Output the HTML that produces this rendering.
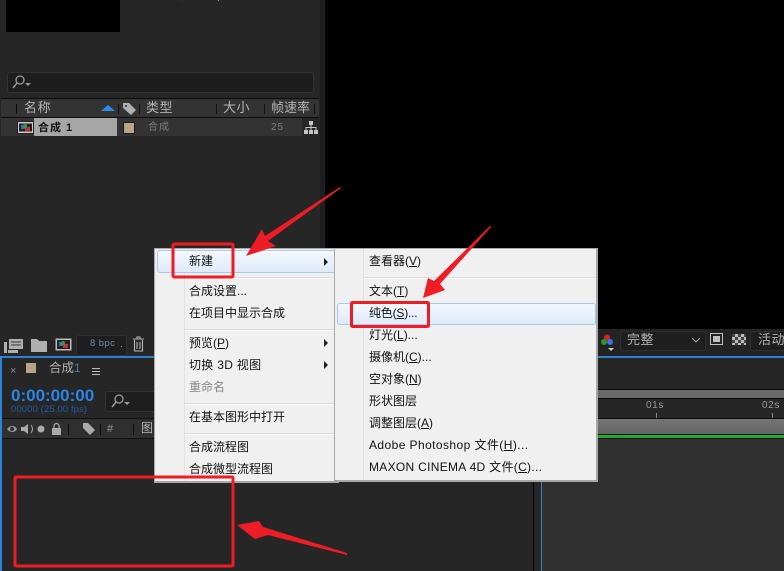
<!DOCTYPE html>
<html><head><meta charset="utf-8">
<style>
html,body{margin:0;padding:0;background:#000}
#r{position:relative;width:784px;height:571px;overflow:hidden;background:#000;font-family:"Liberation Sans","Noto Sans CJK SC",sans-serif}
#r div,#r span.a{position:absolute}
.t{white-space:nowrap;line-height:16px;height:16px}
.g{color:#b4b4b4;font-size:13px}
.m{color:#111;font-size:12px;white-space:nowrap;line-height:16px;height:16px}
.m u{text-underline-offset:1px}
.sep{height:1px;background:#dcdcdc;border-bottom:1px solid #fafafa}
.hl{border:1px solid #a8c8ea;border-radius:3px;background:linear-gradient(#f4f8fd,#dfeafa)}
.tri{width:0;height:0;border-left:4px solid #222;border-top:4px solid transparent;border-bottom:4px solid transparent}
.d{width:1px;background:#111}
</style></head><body>
<div id="r">
<!-- project panel -->
<div style="left:0;top:0;width:320px;height:333px;background:#262626"></div>
<div style="left:320px;top:0;width:5px;height:333px;background:#1e1e1e"></div>
<div style="left:6px;top:0;width:114px;height:32px;background:#000"></div>
<div class="t" style="left:125px;top:-11px;font-size:10px;color:#a8a8a8">□ 0:00:05:00, 25.00 fps</div>
<div style="left:7px;top:72px;width:305px;height:19px;background:#1d1d1d;border:1px solid #323232;border-radius:3px"></div>
<svg style="position:absolute;left:12px;top:74px" width="22" height="16"><circle cx="8" cy="6" r="4" fill="none" stroke="#9a9a9a" stroke-width="1.3"/><path d="M5 9L1 14" stroke="#9a9a9a" stroke-width="1.5"/><path d="M13 9h6l-3 3z" fill="#9a9a9a"/></svg>
<div style="left:1px;top:98px;width:318px;height:1px;background:#0c0c0c"></div>
<div style="left:1px;top:99px;width:318px;height:18px;background:#333"></div>
<div style="left:1px;top:117px;width:318px;height:1px;background:#0c0c0c"></div>
<div class="d" style="left:16px;top:104px;height:10px;background:#0d0d0d"></div>
<div class="d" style="left:118px;top:104px;height:10px"></div>
<div class="d" style="left:139px;top:104px;height:10px"></div>
<div class="d" style="left:216px;top:104px;height:10px"></div>
<div class="d" style="left:264px;top:104px;height:10px"></div>
<div class="d" style="left:314px;top:104px;height:10px"></div>
<div class="t g" style="left:24px;top:100px;letter-spacing:.5px">名称</div>
<div class="t g" style="left:146px;top:100px;letter-spacing:.5px">类型</div>
<div class="t g" style="left:223px;top:100px;letter-spacing:.5px">大小</div>
<div class="t g" style="left:271px;top:100px;font-size:13px">帧速率</div>
<svg style="position:absolute;left:101px;top:104px" width="14" height="8"><path d="M0 7L7 1L14 7z" fill="#2a8fe8"/></svg>
<svg style="position:absolute;left:122px;top:102px" width="15" height="14"><path d="M1 1h6l7 7-5 5-8-7z" fill="#b0b0b0"/><circle cx="4" cy="4" r="1" fill="#333"/></svg>
<div style="left:1px;top:118px;width:301px;height:18px;background:#333"></div>
<div style="left:34px;top:118px;width:83px;height:18px;background:#a6a6a6"></div>
<svg style="position:absolute;left:17px;top:121px" width="17" height="13"><rect x=".5" y=".5" width="16" height="12" fill="#ccc" stroke="#222"/><rect x="2" y="2.5" width="13" height="8" fill="#222"/><rect x="4" y="4" width="5" height="4" fill="#2a70c8"/><rect x="8" y="6" width="5" height="4" fill="#c83030"/><circle cx="8" cy="5" r="2" fill="#3a9a3a"/></svg>
<div class="t" style="left:38px;top:120px;font-size:11px;color:#111;font-weight:bold;letter-spacing:1px">合成 1</div>
<div style="left:123px;top:122px;width:10px;height:10px;background:#b5a488;border:1px solid #1c1c1c"></div>
<div class="t" style="left:148px;top:120px;font-size:10px;color:#7d7d7d;letter-spacing:1px">合成</div>
<div class="t" style="left:271px;top:120px;font-size:10px;color:#7d7d7d;letter-spacing:.8px">25</div>
<svg style="position:absolute;left:304px;top:121px" width="14" height="13"><path d="M5 0h4v4H5zM0 9h4v4H0zM5 9h4v4H5zM10 9h4v4h-4zM6.500 4h1v2h5v3h-1V7h-4v2h-1V7h-4v2h-1V6h5z" fill="#c4c4c4"/></svg>
<!-- bottom left toolbar -->
<div style="left:0;top:333px;width:156px;height:23px;background:#262626"></div>
<svg style="position:absolute;left:3px;top:336px" width="150" height="18"><path d="M6 3h14v10H6zM1 6h3v11H1zM5 14h10v3H5z" fill="#b0b0b0"/><path d="M8 6h10M8 9h10" stroke="#333"/><path d="M28 3h6l2 2h8v11H28z" fill="#b0b0b0"/><rect x="52" y="2" width="17" height="13" fill="#bbb" stroke="#222"/><rect x="54" y="4" width="13" height="9" fill="#222"/><rect x="56" y="6" width="5" height="4" fill="#2a70c8"/><rect x="60" y="8" width="5" height="4" fill="#c83030"/><circle cx="60" cy="7" r="2" fill="#3a9a3a"/></svg>
<div style="left:76px;top:335px;width:49px;height:19px;border:1px solid #2f2f2f;background:#1e1e1e;border-radius:3px"></div>
<div class="t" style="left:90px;top:336px;font-size:9.500px;color:#6f8aa8;letter-spacing:.4px">8 bpc</div>
<div style="left:121px;top:346px;width:1px;height:1px;background:#999"></div>
<svg style="position:absolute;left:132px;top:336px" width="14" height="16"><path d="M1 3h11M5 3V1h3v2M2.500 4v11h8V4M5 6v7M8 6v7" fill="none" stroke="#b4b4b4" stroke-width="1.100"/></svg>
<!-- comp toolbar right -->
<div style="left:598px;top:329px;width:186px;height:27px;background:#232323"></div>
<svg style="position:absolute;left:600px;top:333px" width="18" height="20"><circle cx="7" cy="4.500" r="3" fill="#e02020"/><circle cx="4" cy="9" r="3" fill="#20a020"/><circle cx="10" cy="9" r="3" fill="#3a70f0"/><path d="M8 15h6l-3 3z" fill="#ccc"/></svg>
<div style="left:620px;top:331px;width:84px;height:18px;background:#1e1e1e;border:1px solid #2f2f2f;border-radius:3px"></div>
<div class="t" style="left:627px;top:332px;font-size:13px;color:#b4b4b4;letter-spacing:.5px">完整</div>
<svg style="position:absolute;left:691px;top:337px" width="10" height="6"><path d="M1 1l4 4 4-4" fill="none" stroke="#aaa"/></svg>
<div style="left:710px;top:333px;width:11px;height:10px;border:1px solid #c0c0c0"></div>
<div style="left:713px;top:336px;width:7px;height:6px;background:#c0c0c0"></div>
<div style="left:732px;top:334px;width:14px;height:11px;background:repeating-conic-gradient(#bbb 0 25%,#444 0 50%) 0 0/6px 6px"></div>
<div style="left:750px;top:331px;width:40px;height:18px;background:#1e1e1e;border:1px solid #2f2f2f;border-radius:3px"></div>
<div class="t" style="left:758px;top:332px;font-size:13px;color:#b4b4b4;letter-spacing:.5px">活动</div>
<!-- timeline panel -->
<div style="left:0;top:356px;width:784px;height:215px;background:#262626"></div>
<div style="left:0;top:356px;width:784px;height:2px;background:#2d7fd0"></div>
<div style="left:0;top:356px;width:2px;height:215px;background:#2d84e0"></div>
<div class="t" style="left:10px;top:363px;font-size:11px;color:#888">×</div>
<div style="left:26px;top:363px;width:10px;height:10px;background:#b5a488"></div>
<div class="t" style="left:49px;top:360px;font-size:12.500px;color:#b4b4b4;line-height:16px">合成<span style="color:#4d7fae;font-size:12px">1</span></div>
<div style="left:92px;top:368px;width:8px;height:1px;background:#bbb;box-shadow:0 3px 0 #bbb,0 6px 0 #bbb"></div>
<div class="t" style="left:11px;top:388px;font-weight:bold;font-size:17px;color:#2a84e6">0:00:00:00</div>
<div class="t" style="left:11px;top:402px;font-size:9.500px;color:#1d5ea8;letter-spacing:.1px">00000 (25.00 fps)</div>
<div style="left:105px;top:391px;width:60px;height:19px;background:#1e1e1e;border:1px solid #323232;border-radius:3px"></div>
<svg style="position:absolute;left:111px;top:393px" width="22" height="16"><circle cx="8" cy="6" r="4" fill="none" stroke="#9a9a9a" stroke-width="1.3"/><path d="M5 9L1 14" stroke="#9a9a9a" stroke-width="1.5"/><path d="M13 9h6l-3 3z" fill="#9a9a9a"/></svg>
<div style="left:2px;top:418px;width:531px;height:1px;background:#111"></div>
<div style="left:2px;top:419px;width:531px;height:19px;background:#2f2f2f"></div>
<div style="left:2px;top:438px;width:531px;height:1px;background:#111"></div>
<svg style="position:absolute;left:6px;top:422px" width="130" height="14"><path d="M1 7c3-4 8-4 10 0c-2 4-7 4-10 0z" fill="#999"/><circle cx="6" cy="7" r="2" fill="#333"/><path d="M15 5h3l4-3v10l-4-3h-3z" fill="#aaa"/><path d="M25 3q3 4 0 8" fill="none" stroke="#aaa"/><circle cx="35" cy="7" r="3.500" fill="#aaa"/><rect x="46" y="6" width="9" height="7" fill="#aaa"/><path d="M48 6V4a2.500 2.500 0 0 1 5 0v2" fill="none" stroke="#aaa" stroke-width="1.200"/><path d="M77 1h5l7 7-5 5-7-7z" fill="#aaa"/></svg>
<div class="d" style="left:68px;top:424px;height:11px;background:#0e0e0e"></div>
<div class="d" style="left:100px;top:424px;height:11px;background:#0e0e0e"></div>
<div class="d" style="left:133px;top:424px;height:11px;background:#0e0e0e"></div>
<div class="t" style="left:107px;top:421px;font-size:11px;color:#999">#</div>
<div class="t" style="left:141px;top:420px;font-size:12px;color:#b4b4b4">图</div>
<div style="left:533px;top:358px;width:1px;height:213px;background:#050505"></div>
<div style="left:541px;top:358px;width:1px;height:213px;background:#3a80c0"></div>
<div style="left:542px;top:439px;width:242px;height:132px;background:#303030"></div>
<div style="left:542px;top:389px;width:242px;height:1px;background:#0a0a0a"></div>
<div style="left:542px;top:390px;width:242px;height:8px;background:#6a6a6a"></div>
<div style="left:542px;top:398px;width:242px;height:1px;background:#0a0a0a"></div>
<div style="left:542px;top:418px;width:242px;height:1px;background:#0a0a0a"></div>
<div style="left:542px;top:419px;width:242px;height:15px;background:linear-gradient(#757575,#646464)"></div>
<div style="left:542px;top:434px;width:242px;height:1px;background:#0a0a0a"></div>
<div style="left:542px;top:435px;width:242px;height:3px;background:#16b02a"></div>
<div style="left:542px;top:438px;width:242px;height:1px;background:#0a0a0a"></div>
<div class="t" style="left:646px;top:398px;font-size:10px;color:#9a9a9a;letter-spacing:.6px">01s</div>
<div class="t" style="left:762px;top:398px;font-size:10px;color:#9a9a9a;letter-spacing:.6px">02s</div>
<div style="left:656px;top:413px;width:1px;height:5px;background:#888"></div>
<div style="left:772px;top:413px;width:1px;height:5px;background:#888"></div>
<!-- main menu -->
<div style="left:154px;top:248px;width:185px;height:235px;background:#f0f0f0;border:1px solid #a8a8a8;border-right-width:2px;border-bottom-width:2px;box-sizing:border-box"></div>
<div style="left:184px;top:249px;width:1px;height:232px;background:#e2e2e2"></div>
<div class="hl" style="left:157px;top:250px;width:178px;height:21px"></div>
<div class="m" style="left:189px;top:253px">新建</div>
<div class="tri" style="left:324px;top:258px"></div>
<div class="sep" style="left:185px;top:277px;width:149px"></div>
<div class="m" style="left:189px;top:283px">合成设置...</div>
<div class="m" style="left:189px;top:305px">在项目中显示合成</div>
<div class="sep" style="left:185px;top:329px;width:149px"></div>
<div class="m" style="left:189px;top:335px">预览(<u>P</u>)</div>
<div class="tri" style="left:324px;top:339px"></div>
<div class="m" style="left:189px;top:357px;letter-spacing:.3px">切换 3D 视图</div>
<div class="tri" style="left:324px;top:361px"></div>
<div class="m" style="left:189px;top:379px;color:#888">重命名</div>
<div class="sep" style="left:185px;top:403px;width:149px"></div>
<div class="m" style="left:189px;top:409px">在基本图形中打开</div>
<div class="sep" style="left:185px;top:433px;width:149px"></div>
<div class="m" style="left:189px;top:439px">合成流程图</div>
<div class="m" style="left:189px;top:461px">合成微型流程图</div>
<!-- sub menu -->
<div style="left:334px;top:248px;width:264px;height:234px;background:#f0f0f0;border:1px solid #a8a8a8;border-right-width:2px;border-bottom-width:2px;box-sizing:border-box"></div>
<div style="left:363px;top:249px;width:1px;height:231px;background:#e2e2e2"></div>
<div class="m" style="left:369px;top:253px">查看器(<u>V</u>)</div>
<div class="sep" style="left:364px;top:277px;width:232px"></div>
<div class="m" style="left:369px;top:283px">文本(<u>T</u>)</div>
<div class="hl" style="left:337px;top:303px;width:257px;height:20px"></div>
<div class="m" style="left:369px;top:305px;letter-spacing:-.2px">纯色(<u>S</u>)...</div>
<div class="m" style="left:369px;top:327px">灯光(<u>L</u>)...</div>
<div class="m" style="left:369px;top:349px">摄像机(<u>C</u>)...</div>
<div class="m" style="left:369px;top:371px">空对象(<u>N</u>)</div>
<div class="m" style="left:369px;top:393px">形状图层</div>
<div class="m" style="left:369px;top:415px">调整图层(<u>A</u>)</div>
<div class="m" style="left:369px;top:437px;letter-spacing:.42px">Adobe Photoshop 文件(<u>H</u>)...</div>
<div class="m" style="left:369px;top:459px;letter-spacing:.3px">MAXON CINEMA 4D 文件(<u>C</u>)...</div>
<!-- annotations -->
<svg style="position:absolute;left:0;top:0" width="784" height="571">
<g fill="none" stroke="#ee1c25" stroke-width="3">
<rect x="173" y="244" width="60" height="33" rx="1"/>
<rect x="351.500" y="302.500" width="77" height="24" rx="1"/>
<rect x="15" y="477" width="218" height="89" rx="1"/>
</g>
<g fill="#ee1c25">
<path d="M341 188L268 241L276 246L246 256L262 229L265 236L340 187z"/>
<path d="M491 227L440 284L445 290L423 298L428 278L434 281L490 226z"/>
<path d="M347 555L268 535L255 539L237 525L259 521L263 527L347 553z"/>
</g>
</svg>
</div>
</body></html>
